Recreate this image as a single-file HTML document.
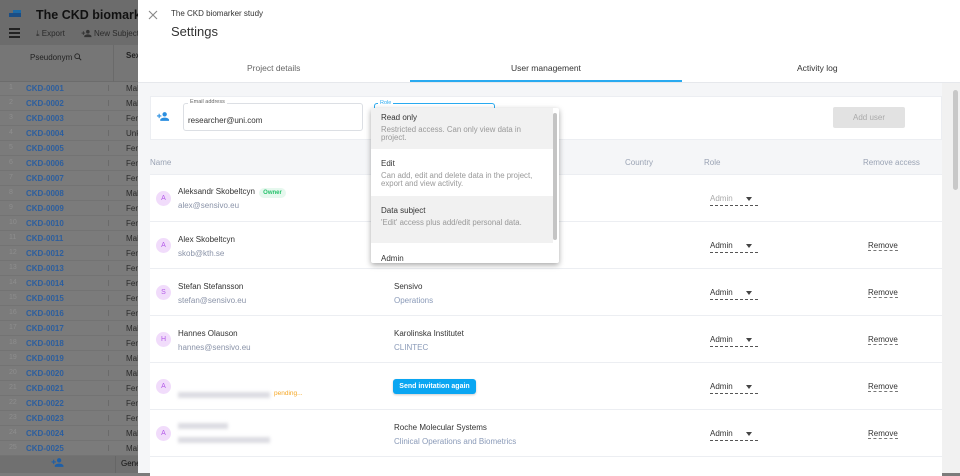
<!DOCTYPE html>
<html><head><meta charset="utf-8"><style>
*{box-sizing:border-box;margin:0;padding:0}
body{width:960px;height:473px;overflow:hidden;position:relative;font-family:"Liberation Sans",Arial,sans-serif;background:#7b7b7b}
.abs{position:absolute}
.lrow{position:absolute;left:0;width:138px;height:15px;font-size:8px;border-bottom:1px solid #737373}
.lrow .n{position:absolute;left:9px;top:3px;color:#8e8e8e;font-size:7px}
.lrow .c{position:absolute;left:26px;top:3px;color:#2c5e9e;font-weight:bold}
.lrow .s{position:absolute;left:126px;top:3px;color:#2a2a2a}
.lrow .d{position:absolute;left:108px;top:4px;width:1px;height:6px;background:#6a6a6a}
.panel{position:absolute;left:138px;top:0;width:822px;height:473px;background:#f5f6f8}
.card{position:absolute;left:12px;width:792px;background:#fff;border-top:1px solid #eceef2}
.row{height:47px}
.av{position:absolute;left:6px;width:15px;height:15px;border-radius:50%;background:#f1dcfb;color:#b35ae8;font-size:7px;text-align:center;line-height:15px}
.nm{position:absolute;left:28px;font-size:8px;color:#333}
.em{position:absolute;left:28px;font-size:8px;color:#8a93a8}
.org{position:absolute;left:244px;font-size:8px;color:#333}
.dep{position:absolute;left:244px;font-size:8px;color:#8a9ab8}
.role{position:absolute;left:560px;width:48px;font-size:8px;color:#333;border-bottom:1px dashed #555;padding-bottom:2px}
.role:after{content:"";position:absolute;right:6px;top:3px;border:3px solid transparent;border-top:4px solid #444}
.rm{position:absolute;left:718px;font-size:8px;color:#333;border-bottom:1px dashed #777}
.blur{background:#dcdce2;filter:blur(1.5px);height:6px;position:absolute}
.dd{position:absolute;left:371px;top:108px;width:188px;height:155px;background:#fff;box-shadow:0 2px 6px rgba(0,0,0,.35);border-radius:2px;overflow:hidden}
.it{position:absolute;left:0;width:182px;padding:5px 10px}
.it b{display:block;font-weight:normal;font-size:8px;color:#333;margin-bottom:4px}
.it span{font-size:7.8px;color:#999;line-height:8px;display:block;width:152px}
</style></head><body>
<!-- left dim app -->
<div class="abs" style="left:0;top:0;width:138px;height:45px;background:#6c6c6c"></div>
<div class="abs" style="left:9px;top:13px;width:12px;height:4px;background:#1b4e85"></div>
<div class="abs" style="left:13px;top:10px;width:8px;height:3px;background:#1d6aa6"></div>
<div class="abs" style="left:36px;top:8px;font-size:12.5px;font-weight:bold;color:#111;white-space:nowrap">The CKD biomarker s</div>
<div class="abs" style="left:9px;top:28px;width:11px;height:1.5px;background:#222"></div>
<div class="abs" style="left:9px;top:32px;width:11px;height:1.5px;background:#222"></div>
<div class="abs" style="left:9px;top:36px;width:11px;height:1.5px;background:#222"></div>
<div class="abs" style="left:36px;top:29px;font-size:8px;color:#2a2a2a;white-space:nowrap">⤓ Export</div>
<svg class="abs" style="left:81px;top:29px" width="11" height="9" viewBox="0 0 24 20"><path d="M15 10a4 4 0 1 0 0-8 4 4 0 0 0 0 8zm-9-2V5H4v3H1v2h3v3h2v-3h3V8H6zm9 4c-2.7 0-8 1.3-8 4v2h16v-2c0-2.7-5.3-4-8-4z" fill="#333"/></svg>
<div class="abs" style="left:94px;top:29px;font-size:8px;color:#2a2a2a;white-space:nowrap">New Subject</div>
<div class="abs" style="left:0;top:45px;width:138px;height:37px;background:#767676;border-bottom:1px solid #6c6c6c"></div>
<div class="abs" style="left:30px;top:53px;font-size:8px;color:#222">Pseudonym</div>
<svg class="abs" style="left:74px;top:53px" width="8" height="8" viewBox="0 0 10 10"><circle cx="4" cy="4" r="3" fill="none" stroke="#222" stroke-width="1.1"/><path d="M6.2 6.2 9 9" stroke="#222" stroke-width="1.2"/></svg>
<div class="abs" style="left:113px;top:45px;width:1px;height:37px;background:#6a6a6a"></div>
<div class="abs" style="left:126px;top:51px;font-size:8px;color:#222;font-weight:bold">Sex</div>
<div class="abs" style="left:0;top:455px;width:138px;height:18px;background:#707070"></div>
<svg class="abs" style="left:51px;top:457px" width="13" height="11" viewBox="0 0 24 20"><path d="M15 10a4 4 0 1 0 0-8 4 4 0 0 0 0 8zm-9-2V5H4v3H1v2h3v3h2v-3h3V8H6zm9 4c-2.7 0-8 1.3-8 4v2h16v-2c0-2.7-5.3-4-8-4z" fill="#1d5fa8"/></svg>
<div class="abs" style="left:115px;top:455px;width:1px;height:18px;background:#666"></div>
<div class="abs" style="left:121px;top:459px;font-size:8px;color:#111">Gene</div>
<div id="rows"></div>
<script>
var s=["Mal","Mal","Fen","Unk","Fen","Fen","Fen","Mal","Fen","Fen","Mal","Fen","Fen","Fen","Fen","Fen","Mal","Fen","Mal","Mal","Fen","Fen","Fen","Mal","Mal"];
var h="";for(var i=0;i<25;i++){var n=("000"+(i+1)).slice(-4);h+='<div class="lrow" style="top:'+(81+i*15)+'px"><span class="n">'+(i+1)+'</span><span class="c">CKD-'+n+'</span><span class="d"></span><span class="s">'+s[i]+'</span></div>';}
document.getElementById("rows").innerHTML=h;
</script>
<!-- panel -->
<div class="panel">
<div class="abs" style="left:0;top:0;width:822px;height:83px;background:#fff;border-bottom:1px solid #e6e8ec"></div>
<svg class="abs" style="left:10px;top:10px" width="10" height="10" viewBox="0 0 10 10"><path d="M1 1l8 8M9 1l-8 8" stroke="#888" stroke-width="1.1"/></svg>
<div class="abs" style="left:33px;top:9px;font-size:8px;color:#333">The CKD biomarker study</div>
<div class="abs" style="left:33px;top:24px;font-size:13px;color:#333">Settings</div>
<div class="abs" style="left:109px;top:63px;font-size:8.5px;color:#666">Project details</div>
<div class="abs" style="left:373px;top:63px;font-size:8.5px;color:#333">User management</div>
<div class="abs" style="left:659px;top:63px;font-size:8.5px;color:#333">Activity log</div>
<div class="abs" style="left:272px;top:80px;width:272px;height:2px;background:#29aaf0"></div>
<!-- add card -->
<div class="card" style="top:96px;height:44px;border:1px solid #eceef2"></div>
<svg class="abs" style="left:18px;top:111px" width="14" height="11" viewBox="0 0 24 20"><path d="M15 10a4 4 0 1 0 0-8 4 4 0 0 0 0 8zm-9-2V5H4v3H1v2h3v3h2v-3h3V8H6zm9 4c-2.7 0-8 1.3-8 4v2h16v-2c0-2.7-5.3-4-8-4z" fill="#2b8fe0"/></svg>
<div class="abs" style="left:45px;top:103px;width:180px;height:28px;border:1px solid #dcdfe4;border-radius:3px"></div>
<div class="abs" style="left:50px;top:99px;font-size:5.5px;color:#666;background:#fff;padding:0 2px">Email address</div>
<div class="abs" style="left:50px;top:116px;font-size:8px;color:#333">researcher@uni.com</div>
<div class="abs" style="left:236px;top:103px;width:121px;height:10px;border:1px solid #29aaf0;border-bottom:none;border-radius:3px 3px 0 0"></div>
<div class="abs" style="left:240px;top:100px;font-size:5.5px;color:#29aaf0;background:#fff;padding:0 2px">Role</div>
<div class="abs" style="left:695px;top:107px;width:72px;height:21px;background:#e2e2e2;border-radius:2px;font-size:8px;color:#aaa;text-align:center;line-height:21px">Add user</div>
<!-- header -->
<div class="abs" style="left:12px;top:158px;font-size:8px;color:#9aa3b4">Name</div>
<div class="abs" style="left:487px;top:158px;font-size:8px;color:#9aa3b4">Country</div>
<div class="abs" style="left:566px;top:158px;font-size:8px;color:#9aa3b4">Role</div>
<div class="abs" style="left:725px;top:158px;font-size:8px;color:#9aa3b4">Remove access</div>
<!-- rows -->
<div class="card row" style="top:174px">
 <div class="av" style="top:16px">A</div>
 <div class="nm" style="top:12px">Aleksandr Skobeltcyn <span style="background:#e6f8ee;color:#25c26b;font-size:6px;font-weight:bold;padding:2px 4px;border-radius:6px;margin-left:2px">Owner</span></div>
 <div class="em" style="top:26px">alex@sensivo.eu</div>
 <div class="role" style="top:19px;color:#aaa">Admin</div>
</div>
<div class="card row" style="top:221px">
 <div class="av" style="top:16px">A</div>
 <div class="nm" style="top:13px">Alex Skobeltcyn</div>
 <div class="em" style="top:27px">skob@kth.se</div>
 <div class="role" style="top:19px">Admin</div><div class="rm" style="top:19px">Remove</div>
</div>
<div class="card row" style="top:268px">
 <div class="av" style="top:16px">S</div>
 <div class="nm" style="top:13px">Stefan Stefansson</div>
 <div class="em" style="top:27px">stefan@sensivo.eu</div>
 <div class="org" style="top:13px">Sensivo</div><div class="dep" style="top:27px">Operations</div>
 <div class="role" style="top:19px">Admin</div><div class="rm" style="top:19px">Remove</div>
</div>
<div class="card row" style="top:315px">
 <div class="av" style="top:16px">H</div>
 <div class="nm" style="top:13px">Hannes Olauson</div>
 <div class="em" style="top:27px">hannes@sensivo.eu</div>
 <div class="org" style="top:13px">Karolinska Institutet</div><div class="dep" style="top:27px">CLINTEC</div>
 <div class="role" style="top:19px">Admin</div><div class="rm" style="top:19px">Remove</div>
</div>
<div class="card row" style="top:362px">
 <div class="av" style="top:16px">A</div>
 <div class="blur" style="left:28px;top:29px;width:92px"></div>
 <div class="abs" style="left:124px;top:27px;font-size:6.5px;color:#f5a623">pending...</div>
 <div class="abs" style="left:243px;top:16px;width:83px;height:15px;background:#0aa6f2;border-radius:3px;color:#fff;font-size:7px;font-weight:bold;text-align:center;line-height:15px;box-shadow:0 1px 2px rgba(0,0,0,.2)">Send invitation again</div>
 <div class="role" style="top:19px">Admin</div><div class="rm" style="top:19px">Remove</div>
</div>
<div class="card row" style="top:409px">
 <div class="av" style="top:16px">A</div>
 <div class="blur" style="left:28px;top:13px;width:50px"></div>
 <div class="blur" style="left:28px;top:27px;width:92px"></div>
 <div class="org" style="top:13px">Roche Molecular Systems</div><div class="dep" style="top:27px">Clinical Operations and Biometrics</div>
 <div class="role" style="top:19px">Admin</div><div class="rm" style="top:19px">Remove</div>
</div>
<div class="card" style="top:456px;height:20px"></div>
<div class="abs" style="left:804px;top:83px;width:18px;height:390px;background:#f1f1f1"></div>
<div class="abs" style="left:815px;top:90px;width:5px;height:100px;background:#c8c8c8;border-radius:3px"></div>
</div>
<!-- dropdown -->
<div class="dd">
 <div class="it" style="top:0;height:41px;background:#f1f1f1"><b>Read only</b><span>Restricted access. Can only view data in project.</span></div>
 <div class="it" style="top:41px;height:47px"><b style="margin-top:5px">Edit</b><span>Can add, edit and delete data in the project, export and view activity.</span></div>
 <div class="it" style="top:88px;height:47px;background:#f1f1f1"><b style="margin-top:5px">Data subject</b><span>'Edit' access plus add/edit personal data.</span></div>
 <div class="it" style="top:135px;height:20px"><b style="margin-top:6px">Admin</b></div>
 <div class="abs" style="left:182px;top:5px;width:4px;height:127px;background:#c4c4c4;border-radius:2px"></div>
</div>
</body></html>
